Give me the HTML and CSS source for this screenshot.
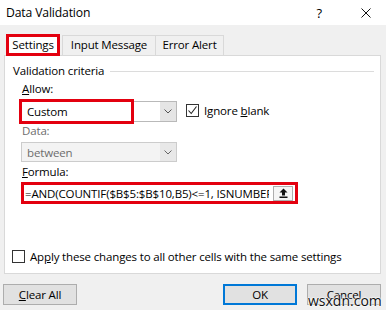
FILE: index.html
```html
<!DOCTYPE html>
<html lang="en">
<head>
  <meta charset="UTF-8">
  <meta name="viewport" content="width=device-width, initial-scale=1.0">
  <title>Data Validation</title>
  <link rel="stylesheet" href="styles.css">
</head>
<body>
  <div class="dialog">
    <div class="titlebar">
      <span class="title">Data Validation</span>
      <span class="help">?</span>
      <svg class="close" width="10" height="10" viewBox="0 0 10 10"><path d="M0.5 0.5L9.5 9.5M9.5 0.5L0.5 9.5" stroke="#111" stroke-width="1"/></svg>
    </div>

    <div class="tabs">
      <div class="tab active">Settings</div>
      <div class="tab middle">Input Message</div>
      <div class="tab last">Error Alert</div>
    </div>

    <div class="panel">
      <div class="group-head">
        <span>Validation criteria</span>
        <span class="rule"></span>
      </div>

      <div class="fields">
        <div class="label"><u>A</u>llow:</div>
        <div class="row">
          <div class="select">
            <span class="value">Custom</span>
            <span class="drop"><svg width="8" height="5" viewBox="0 0 8 5"><path d="M0.5 0.5L4 4L7.5 0.5" fill="none" stroke="#555"/></svg></span>
            <span class="mark mark-allow"></span>
          </div>
          <label class="check">
            <span class="box"><svg width="11" height="11" viewBox="0 0 11 11"><path d="M1.5 5.5L4.2 8.5L9.5 1.5" fill="none" stroke="#222" stroke-width="1.1"/></svg></span>
            <span>Ignore <u>b</u>lank</span>
          </label>
        </div>

        <div class="label muted">Data:</div>
        <div class="select disabled">
          <span class="value">between</span>
          <span class="drop"><svg width="8" height="5" viewBox="0 0 8 5"><path d="M0.5 0.5L4 4L7.5 0.5" fill="none" stroke="#666"/></svg></span>
        </div>

        <div class="label"><u>F</u>ormula:</div>
        <div class="formula">
          <span class="formula-text">=AND(COUNTIF($B$5:$B$10,B5)&lt;=1, ISNUMBER(B5))</span>
          <span class="pick"><svg width="9" height="10" viewBox="0 0 9 10"><path d="M4.5 0.5L8.5 4.5H6V7.5H3V4.5H0.5Z" fill="#111"/><rect x="0.5" y="8.5" width="8" height="1.5" fill="#111"/></svg></span>
        </div>
      </div>

      <label class="check apply">
        <span class="box"></span>
        <span>Ap<u>p</u>ly these changes to all other cells with the same settings</span>
      </label>
    </div>

    <div class="buttons">
      <button class="btn"><u>C</u>lear All</button>
      <span class="spacer"></span>
      <button class="btn ok">OK</button>
      <button class="btn">Cancel</button>
      <span class="watermark">wsxdn.com</span>
    </div>
  </div>
</body>
</html>
```

FILE: styles.css
```css
body {
    margin: 0;
    background: #f0f0f0;
    font-family: "Open Sans", "Noto Sans", sans-serif;
    font-size: 11.5px;
    letter-spacing: -0.15px;
    color: #000;
}
.dialog {
    width: 386px;
    height: 310px;
    overflow: hidden;
}
.titlebar {
    height: 25px;
    background: #fff;
    display: flex;
    align-items: center;
    padding-left: 6px;
}
.title {
    flex: 1;
    font-size: 12.2px;
}
.help {
    font-size: 13px;
    margin-right: 39px;
}
.close {
    margin-right: 15px;
}
.tabs {
    display: flex;
    align-items: flex-end;
    height: 21px;
    margin-top: 9px;
    padding-left: 6px;
}
.tab {
    box-sizing: border-box;
    height: 20px;
    line-height: 18px;
    text-align: center;
    border: 1px solid #d9d9d9;
    border-bottom: none;
    background: #f0f0f0;
}
.tab.active {
    width: 54px;
    height: 22px;
    margin-bottom: -1px;
    line-height: 16px;
    border: 3px solid #e3000f;
    background: #fff;
    position: relative;
    z-index: 1;
}
.tab.middle {
    width: 94px;
    margin-left: 2px;
}
.tab.last {
    width: 68px;
    border-left: none;
}
.panel {
    box-sizing: border-box;
    height: 219px;
    margin: 0 5px 0 4px;
    background: #fff;
    border: 1px solid #d9d9d9;
    display: flex;
    flex-direction: column;
}
.group-head {
    display: flex;
    align-items: center;
    line-height: 16px;
    margin-top: 7px;
    padding-left: 8px;
    padding-right: 6px;
}
.rule {
    flex: 1;
    height: 1px;
    background: #dcdcdc;
    margin-left: 6px;
}
.fields {
    padding-left: 16px;
}
.label {
    line-height: 16px;
    padding-left: 1px;
    margin-top: 2px;
}
.label.muted {
    color: #6d6d6d;
    margin-top: 1px;
}
.row {
    display: flex;
    align-items: center;
    margin-top: 4px;
}
.select {
    box-sizing: border-box;
    position: relative;
    width: 156px;
    height: 21px;
    border: 1px solid #b9b9b9;
    background: #fff;
    display: flex;
    align-items: center;
}
.select .value {
    flex: 1;
    padding-left: 5px;
}
.drop {
    width: 16px;
    height: 19px;
    background: #e5e5e5;
    display: flex;
    align-items: center;
    justify-content: center;
}
.select.disabled {
    margin-top: 3px;
    height: 20px;
    border-color: #cccccc;
    background: #f3f3f3;
    color: #6d6d6d;
}
.select.disabled .drop {
    height: 18px;
    background: #e8e8e8;
}
.mark {
    position: absolute;
    box-sizing: border-box;
    border: 3px solid #e3000f;
}
.mark-allow {
    left: -3px;
    top: -3px;
    width: 115px;
    height: 25px;
}
.check {
    display: flex;
    align-items: center;
    gap: 5px;
}
.row .check {
    margin-left: 9px;
    margin-top: -2px;
}
.box {
    box-sizing: border-box;
    width: 13px;
    height: 13px;
    border: 1px solid #333;
    background: #fff;
    display: flex;
    align-items: center;
    justify-content: center;
}
.formula {
    box-sizing: border-box;
    width: 277px;
    height: 22px;
    margin-top: 2px;
    border: 3px solid #e3000f;
    display: flex;
    align-items: center;
    padding-left: 1px;
}
.formula-text {
    flex: 1;
    white-space: nowrap;
    overflow: hidden;
}
.pick {
    box-sizing: border-box;
    width: 20px;
    height: 15px;
    margin: 0 2px 0 4px;
    border: 1px solid #adadad;
    background: #f5f5f5;
    display: flex;
    align-items: center;
    justify-content: center;
}
.apply {
    margin-top: auto;
    margin-bottom: 9px;
    padding-left: 7px;
}
.buttons {
    position: relative;
    display: flex;
    margin-top: 10px;
    padding: 0 5px 0 3px;
}
.spacer {
    flex: 1;
}
.btn {
    box-sizing: border-box;
    width: 74px;
    height: 21px;
    padding: 0;
    border: 1px solid #adadad;
    background: #e1e1e1;
    font-family: inherit;
    font-size: 11.5px;
    letter-spacing: -0.15px;
    color: #000;
}
.btn.ok {
    border: 2px solid #0078d7;
    margin-right: 10px;
}
.watermark {
    position: absolute;
    left: 308px;
    top: 9px;
    font-size: 14px;
    line-height: 16px;
    letter-spacing: 0;
    color: #111;
    text-shadow: 0 0 2px #fff, 0 0 2px #fff, 0 0 2px #fff;
}
```
